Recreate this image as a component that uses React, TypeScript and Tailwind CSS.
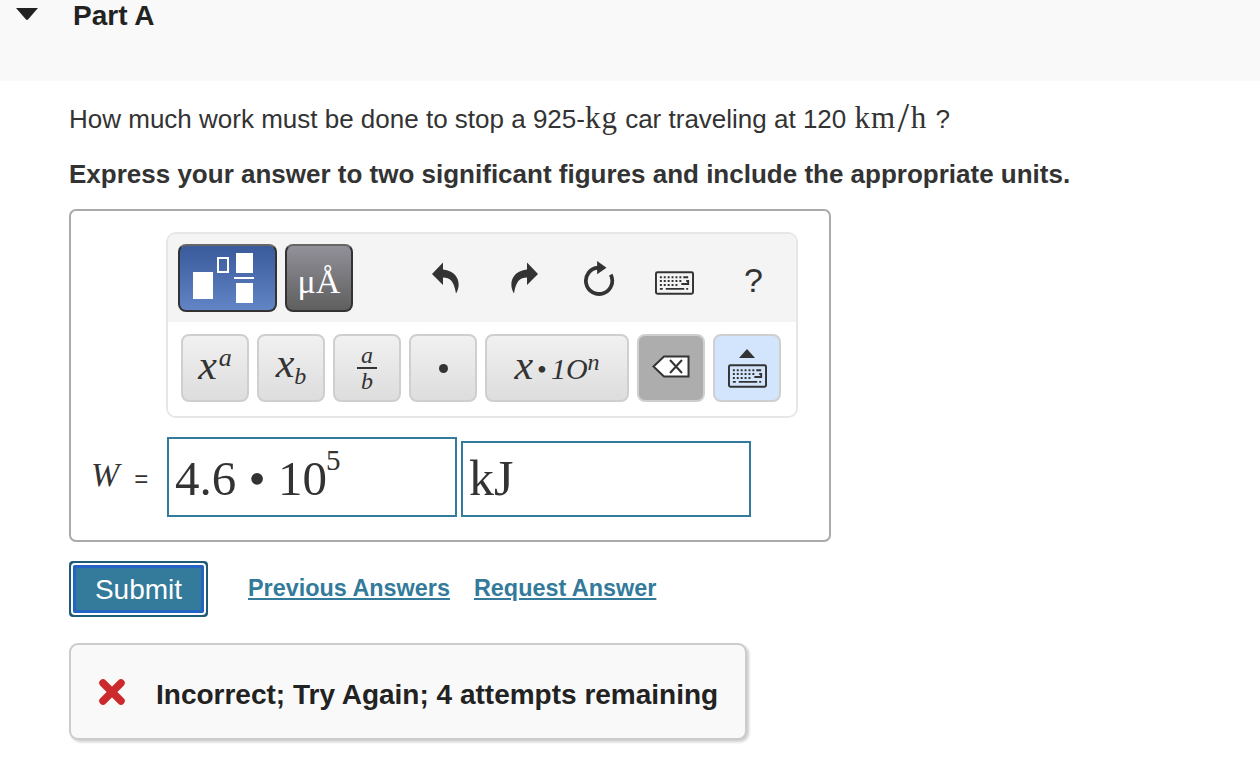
import React from "react";

const sans = "font-['Liberation_Sans',Arial,sans-serif]";
const serif = "font-['Liberation_Serif','Times_New_Roman',serif]";

function Keyboard({ className }: { className?: string }) {
  return (
    <svg viewBox="0 0 40 24" className={className}>
      <rect x="1" y="1" width="38" height="22" rx="1.5" fill="none" stroke="#333" strokeWidth="2" />
      <path d="M5 6h2M9 6h2M13 6h2M17 6h2M21 6h2M25 6h2M29 6h5M5 10h2M9 10h2M13 10h2M17 10h2M21 10h2M25 10h2M32 10h2V13H27M5 14h2M9 14h2M13 14h2M17 14h2M21 14h2M5 18h3M11 18h19M32 18h2" stroke="#333" strokeWidth="2" fill="none" />
    </svg>
  );
}

function UndoIcon({ flip }: { flip?: boolean }) {
  return (
    <svg viewBox="0 0 28 32" className={`w-7 h-8 ${flip ? "-scale-x-100" : ""}`}>
      <path d="M11 0.500 L0 12 L11 23 V15.500 C18 15.500 22 19 24 31.500 C29 24 28 9.500 11 7.500 Z" fill="#333" />
    </svg>
  );
}

function KeyBtn({ children, wide, className }: { children: React.ReactNode; wide?: boolean; className?: string }) {
  return (
    <div
      className={`${wide ? "w-[144px]" : "w-[68px]"} h-[68px] rounded-[8px] border-2 border-[#cfcfcf] flex items-center justify-center ${
        className ?? "bg-gradient-to-b from-[#f1f1f1] to-[#dddddd]"
      }`}
    >
      {children}
    </div>
  );
}

function Tool({ children, className }: { children: React.ReactNode; className?: string }) {
  return <div className={`flex items-center justify-center ${className ?? ""}`}>{children}</div>;
}

export default function App() {
  return (
    <main className={`w-[1260px] h-[758px] overflow-hidden bg-white text-[#333] ${sans}`}>
      <header className="h-[81px] bg-[#f9f9f9] flex items-start pl-[16px]">
        <svg viewBox="0 0 22 12" className="w-[22px] h-[12px] mt-[8px]">
          <path d="M0 0h22L12 11.500a1.500 1.500 0 0 1-2 0Z" fill="#222" />
        </svg>
        <h2 className="ml-[35px] text-[28px] leading-[32px] font-bold text-[#222]">Part A</h2>
      </header>

      <section className="pl-[69px]">
        <p className="mt-[21px] h-[32px] text-[26px] leading-[32px] whitespace-nowrap">
          How much work must be done to stop a 925-<span className={`${serif} text-[31px] leading-none tracking-[1px]`}>kg</span> car traveling at 120{" "}
          <span className={`${serif} text-[31px] leading-none ml-[1px]`}>
            <span className="tracking-[1px]">km</span>
            <span className="inline-block leading-none scale-[1.35] mx-[3px]">/</span>h
          </span>{" "}
          <span className="ml-[2px]">?</span>
        </p>
        <p className="mt-[24px] text-[26px] leading-[32px] font-bold whitespace-nowrap">
          Express your answer to two significant figures and include the appropriate units.
        </p>

        <div className="mt-[19px] w-[762px] h-[333px] border-2 border-[#aaaaaa] rounded-[7px] pt-[21px] pl-[95px]">
          <div className="w-[632px] h-[186px] border-2 border-[#e6e6e6] rounded-[10px] overflow-hidden">
            <div className="h-[88px] bg-[#f4f4f4] flex items-center pl-[10px]">
              <div className="w-[99px] h-[68px] rounded-[8px] border-2 border-[#333] border-t-[#666] bg-gradient-to-b from-[#395a9b] to-[#6285c6] flex items-center justify-center">
                <svg viewBox="0 0 62 50" className="w-[62px] h-[50px] mr-[8px]">
                  <rect x="0" y="19" width="20" height="27" fill="#fff" />
                  <rect x="25" y="5" width="10" height="14" fill="none" stroke="#fff" strokeWidth="2" />
                  <rect x="43" y="0" width="17" height="20" fill="#fff" />
                  <rect x="41" y="24" width="20" height="2" fill="#fff" />
                  <rect x="43" y="30" width="17" height="20" fill="#fff" />
                </svg>
              </div>
              <div className={`ml-[8px] w-[68px] h-[68px] rounded-[8px] border-2 border-[#333] border-t-[#666] bg-gradient-to-b from-[#92919a] to-[#5f5f5f] flex items-center justify-center text-white text-[34px] leading-none pt-[8px] ${serif}`}>
                μÅ
              </div>
              <Tool className="ml-[79px] w-7">
                <UndoIcon />
              </Tool>
              <Tool className="ml-[50px] w-7">
                <UndoIcon flip />
              </Tool>
              <Tool className="ml-[45px] w-8">
                <svg viewBox="0 0 34 36" className="w-[34px] h-[36px]">
                  <path d="M16 7A14 14 0 1 0 29.500 14.500" fill="none" stroke="#333" strokeWidth="4" />
                  <path d="M15 0L25 7L15 14Z" fill="#333" />
                </svg>
              </Tool>
              <Tool className="ml-[40px] mt-[9px]">
                <Keyboard className="w-[39px] h-[24px]" />
              </Tool>
              <div className="ml-[50px] text-[34px] leading-none mt-[3px]">?</div>
            </div>
            <div className="h-[94px] bg-white flex gap-[8px] pl-[13px] pt-[12px]">
              <KeyBtn>
                <span className={`${serif} italic text-[42px] leading-none -mt-[6px]`}>
                  x<span className="text-[26px] align-[13px] leading-none ml-[2px]">a</span>
                </span>
              </KeyBtn>
              <KeyBtn>
                <span className={`${serif} italic text-[42px] leading-none -mt-[6px]`}>
                  x<span className="text-[24px] align-[-7px] leading-none">b</span>
                </span>
              </KeyBtn>
              <KeyBtn>
                <span className={`${serif} italic flex flex-col items-center text-[24px] leading-[20px]`}>
                  <span>a</span>
                  <span className="w-[20px] h-[2px] bg-[#333] my-[2px]" />
                  <span>b</span>
                </span>
              </KeyBtn>
              <KeyBtn>
                <span className="w-[9px] h-[9px] rounded-full bg-[#333]" />
              </KeyBtn>
              <KeyBtn wide>
                <span className={`${serif} italic text-[42px] leading-none whitespace-nowrap -mt-[6px]`}>
                  x<span className="not-italic text-[28px] mx-[4px]">•</span>
                  <span className="text-[30px]">1O</span>
                  <span className="text-[24px] align-[9px] leading-none">n</span>
                </span>
              </KeyBtn>
              <KeyBtn className="bg-[#adadad]">
                <svg viewBox="0 0 38 24" className="w-[38px] h-[24px] -mt-[2px]">
                  <path d="M12 1.500H36.500V21.500H12L1.500 11.500Z" fill="#fff" stroke="#333" strokeWidth="2" />
                  <path d="M18 5L30 18M30 5L18 18" stroke="#333" strokeWidth="2" />
                </svg>
              </KeyBtn>
              <KeyBtn className="bg-[#d3e5fd] flex-col gap-[6px]">
                <svg viewBox="0 0 16 9" className="w-[16px] h-[9px]">
                  <path d="M8 0L16 9H0Z" fill="#333" />
                </svg>
                <Keyboard className="w-[39px] h-[24px]" />
              </KeyBtn>
            </div>
          </div>

          <div className="flex items-end mt-[19px] -ml-[75px]">
            <div className={`${serif} w-[76px] h-[76px] flex items-center gap-[15px] pb-[8px] text-[#333]`}>
              <span className="italic text-[34px] leading-none">W</span>
              <span className={`${sans} text-[24px] leading-none mt-[8px]`}>=</span>
            </div>
            <div className={`w-[290px] h-[80px] border-2 border-[#337a9b] ${serif} text-[49px] pl-[6px] pt-[7px] leading-[56px] whitespace-nowrap`}>
              4.6 • 10<span className="text-[29px] align-[25px] leading-none -ml-[1px]">5</span>
            </div>
            <div className={`ml-[4px] w-[290px] h-[76px] border-2 border-[#337a9b] ${serif} text-[50px] pl-[6px] pt-[7px] leading-[56px]`}>
              kJ
            </div>
          </div>
        </div>

        <div className="mt-[19px] flex items-center">
          <button className="w-[139px] h-[56px] rounded-[4px] bg-[#1f5a78] p-[2px]">
            <span className="block w-full h-full rounded-[4px] border-2 border-white">
              <span className="flex items-center justify-center w-full h-full rounded-[4px] border-[3px] border-[#2563c4] bg-[#337a9b] text-white text-[28px] pt-[1px]">
                Submit
              </span>
            </span>
          </button>
          <a className="ml-[40px] text-[23.400px] font-bold text-[#337a9b] underline">Previous Answers</a>
          <a className="ml-[24px] text-[23.400px] font-bold text-[#337a9b] underline">Request Answer</a>
        </div>

        <div className="mt-[26px] w-[678px] h-[97px] rounded-[9px] border-2 border-[#cccccc] bg-[#f9f9f9] shadow-[2px_2px_3px_rgba(0,0,0,0.2)] flex items-center pl-[27px]">
          <svg viewBox="0 0 28 28" className="w-[28px] h-[28px]">
            <path d="M5 5L23 23M23 5L5 23" stroke="#cc2a2d" strokeWidth="7.500" strokeLinecap="round" />
          </svg>
          <span className="ml-[30px] mt-[6px] text-[28px] font-bold text-[#222] whitespace-nowrap">
            Incorrect; Try Again; 4 attempts remaining
          </span>
        </div>
      </section>
    </main>
  );
}
